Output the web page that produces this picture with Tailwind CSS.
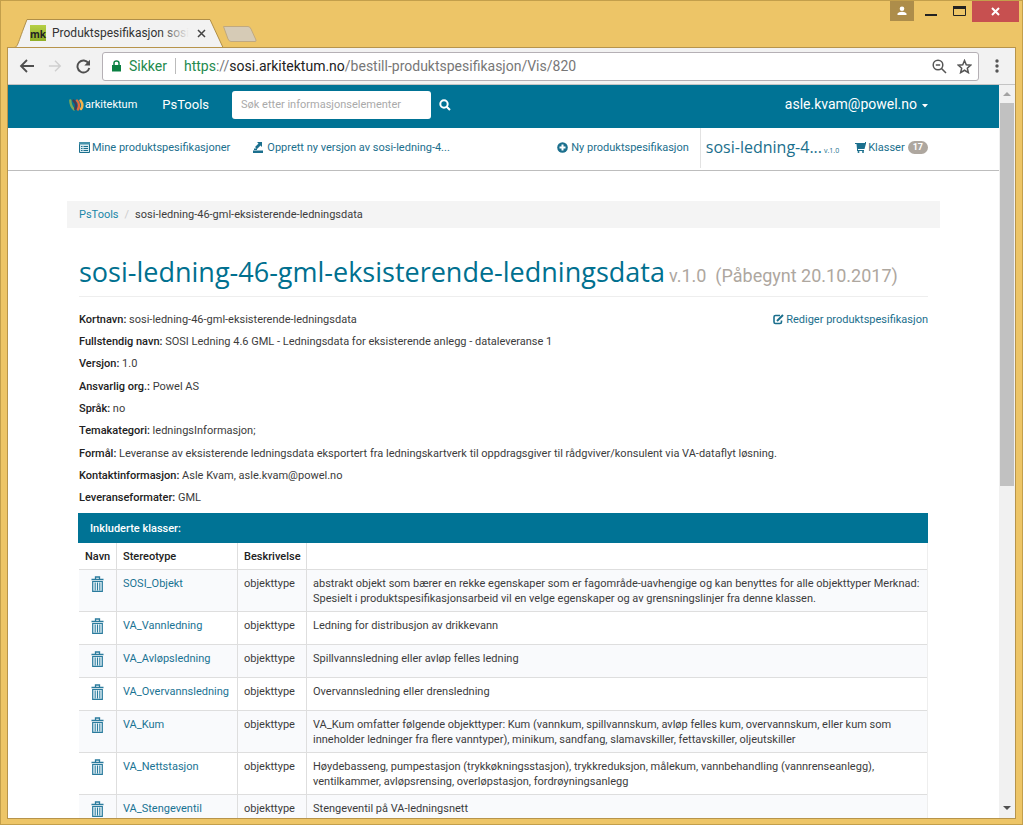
<!DOCTYPE html>
<html lang="no">
<head>
<meta charset="utf-8">
<title>Produktspesifikasjon sosi-ledning-46</title>
<script src="https://cdn.jsdelivr.net/npm/@tailwindcss/browser@4"></script>
</head>
<body class="flex h-screen flex-col overflow-hidden border border-[#c39f4b] bg-[#edc567] px-[6px] pb-[5px] font-['Roboto','Noto_Sans',sans-serif] text-[11px] leading-[15px] text-[#3c3c3c]">
<svg class="hidden">
  <symbol id="trash" viewBox="0 0 13 16"><path d="M.5 3.5h12M4.5 3V1h4v2" fill="none" stroke="#2a7b9d" stroke-width="1.3"/><path d="M1.7 5.5h9.6v9.8H1.7z" fill="#e4f1f6" stroke="#2a7b9d" stroke-width="1.2"/><path d="M4.2 6.500v8M6.500 6.500v8M8.800 6.500v8" stroke="#2a7b9d"/></symbol>
</svg>
<header class="flex h-[46px] shrink-0 justify-between">
  <div class="flex items-end pl-[7px]">
    <div class="relative flex h-[28px] w-[211px] items-center pr-[19px] pl-[16px] text-[12px] text-[#333]">
      <svg class="absolute inset-0 h-full w-full" viewBox="0 0 211 28" preserveAspectRatio="none"><path d="M0 28.500C4 28 3 26 13 .5H196L209 28.500" fill="#f2f2f2" stroke="#b08f48"/></svg>
      <span class="relative flex h-4 w-4 items-end justify-center bg-linear-to-b from-[#b5cf45] to-[#8fae27] font-['Open_Sans'] text-[10px] leading-[13px] font-bold text-[#222]">mk</span>
      <span class="relative ml-[6px] whitespace-nowrap">Produktspesifikasjon sosi<span class="absolute inset-y-0 right-0 w-7 bg-linear-to-r from-transparent to-[#f2f2f2]"></span></span>
      <button class="relative ml-auto" aria-label="Lukk fane"><svg width="9" height="9" viewBox="0 0 9 9" stroke="#444" stroke-width="1.5"><path d="M1 1l7 7M8 1L1 8"/></svg></button>
    </div>
    <button aria-label="Ny fane" class="mb-1 -ml-[3px]"><svg width="36" height="18" viewBox="0 0 36 18"><path d="M1.500 1.500H26Q28 1.500 29 4L34 15Q34.500 16.500 33 16.500H9Q7 16.500 6 14Z" fill="#d6cbb6" stroke="#c0a980"/></svg></button>
  </div>
  <div class="-mr-[3px] flex items-start">
    <button aria-label="Bruker" class="flex h-5 w-6 items-center justify-center bg-[#ad8d4a]"><svg width="10" height="10" viewBox="0 0 10 10" fill="#fff"><circle cx="5" cy="2.700" r="2.300"/><path d="M.5 9V7.500Q1.500 5.800 5 5.800T9.500 7.500V9z"/></svg></button>
    <button aria-label="Minimer" class="flex h-5 w-[33px] items-end justify-center pb-[5px]"><svg width="12" height="2"><path d="M0 0h12v2H0z" fill="#222"/></svg></button>
    <button aria-label="Maksimer" class="flex h-5 w-[25px] items-center justify-center"><svg width="13" height="10"><path d="M.5 1v8.500h12V1" fill="none" stroke="#222"/><path d="M0 0h13v3H0z" fill="#222"/></svg></button>
    <button aria-label="Lukk" class="flex h-[21px] w-[47px] items-center justify-center bg-[#c75050]"><svg width="9" height="9" viewBox="0 0 9 9" stroke="#fff" stroke-width="2"><path d="M1 1l7 7M8 1L1 8"/></svg></button>
  </div>
</header>
<div class="flex min-h-0 flex-1 flex-col border border-[#b7944b] bg-white">
  <div class="flex h-[37px] shrink-0 items-center border-b border-[#c4c4c4] bg-[#f2f2f2] pl-[11px]">
    <button aria-label="Tilbake"><svg width="16" height="14" viewBox="0 0 16 14" fill="none" stroke="#4f4f4f" stroke-width="1.800"><path d="M15 7H2M8 1L2 7l6 6"/></svg></button>
    <button aria-label="Frem" class="ml-[13px]"><svg width="14" height="14" viewBox="0 0 16 14" fill="none" stroke="#cfcfcf" stroke-width="1.600"><path d="M1 7h13M8 1l6 6-6 6"/></svg></button>
    <button aria-label="Last på nytt" class="ml-[14px]"><svg width="15" height="15" viewBox="0 0 15 15"><path d="M12.500 4.200A6 6 0 1 0 13.300 9" fill="none" stroke="#4f4f4f" stroke-width="1.900"/><path d="M14 .8V6.500H8.300z" fill="#4f4f4f"/></svg></button>
    <div class="ml-[11px] flex h-[29px] flex-1 items-center rounded-[3px] border border-[#b5b0b5] bg-white px-[6px] pl-2 text-[14px] whitespace-nowrap">
      <svg width="11" height="12" viewBox="0 0 11 12"><path d="M1 5h9v6.500H1z" fill="#0b8043"/><path d="M3 5V3.200Q3 1 5.500 1T8 3.200V5" fill="none" stroke="#0b8043" stroke-width="1.500"/></svg>
      <span class="ml-[7px] text-[#238a4e]">Sikker</span>
      <span class="mx-2 h-4 w-px bg-[#bbb]"></span>
      <span class="flex-1 text-[#777]"><span class="text-[#238a4e]">https</span>://<span class="text-[#222]">sosi.arkitektum.no</span>/bestill-produktspesifikasjon/Vis/820</span>
      <button aria-label="Zoom"><svg width="15" height="15" viewBox="0 0 15 15" fill="none" stroke="#555" stroke-width="1.500"><circle cx="6" cy="6" r="4.800"/><path d="M9.500 9.500L14 14M3.800 6h4.400"/></svg></button>
      <button aria-label="Bokmerk" class="ml-[10px]"><svg width="15" height="15" viewBox="0 0 24 24" fill="none" stroke="#555" stroke-width="2.400"><path d="M12 2.500l2.800 6.800 7.200.6-5.500 4.800 1.700 7.100L12 18l-6.200 3.800 1.700-7.100L2 9.900l7.200-.6z"/></svg></button>
    </div>
    <button aria-label="Meny" class="mr-[6px] ml-[6px] flex w-6 justify-center"><svg width="4" height="14" fill="#555"><circle cx="2" cy="2" r="1.700"/><circle cx="2" cy="7" r="1.700"/><circle cx="2" cy="12" r="1.700"/></svg></button>
  </div>
  <div class="flex min-h-0 flex-1">
    <div class="min-w-0 flex-1 overflow-hidden">
      <nav class="flex h-[43px] items-center bg-[#007395] pr-[71px] pb-[4px] pl-[61px] text-white">
        <a href="#" class="flex items-center text-[11px]" ><svg class="mr-px" width="15" height="12" viewBox="0 0 15 12" fill="none" stroke-width="2.400" stroke-linecap="round"><path d="M1.300 1.500Q1.500 7 5 10.500" stroke="#79a95a"/><path d="M4.500 1.500Q8.500 5 6.300 10" stroke="#493a50"/><path d="M8 1.500Q11.500 5 9 10.500" stroke="#e5683b"/><path d="M11.500 1.500Q15 6 12 10" stroke="#f3b44b"/></svg>arkitektum</a>
        <a href="#" class="ml-[25px] text-[13px]">PsTools</a>
        <input aria-label="Søk" placeholder="Søk etter informasjonselementer" class="ml-[23px] h-7 w-[199px] rounded-[3px] bg-white px-[9px] text-[11px] placeholder:text-[#aaa]">
        <button aria-label="Søk" class="ml-2"><svg width="12" height="12" viewBox="0 0 12 12" fill="none" stroke="#fff" stroke-width="2"><circle cx="5" cy="5" r="3.700"/><path d="M7.700 7.700L11 11"/></svg></button>
        <button class="ml-auto flex items-center text-[14px]">asle.kvam@powel.no<svg class="mt-[2px] ml-[5px]" width="6" height="4"><path d="M0 0h6L3 3.500z" fill="#fff"/></svg></button>
      </nav>
      <nav class="flex h-[43px] items-center border-b border-[#bdbdbd] pr-[71px] pb-[3px] pl-[71px] whitespace-nowrap text-[#1b6f8d]">
        <a href="#" class="flex items-center"><svg class="mr-[2px]" width="11" height="11" viewBox="0 0 11 11"><path d="M.5.500h10v10H.5z" fill="#d8eaf0" stroke="#1b6f8d"/><path d="M0 0h11v2.500H0z" fill="#4793ab"/><path d="M2 4.500h1.500M4.500 4.500h4.500M2 6.500h1.500M4.500 6.500h4.500M2 8.500h1.500M4.500 8.500h4.500" stroke="#1b6f8d"/></svg>Mine produktspesifikasjoner</a>
        <a href="#" class="ml-[23px] flex items-center"><svg class="mr-1" width="10" height="11" viewBox="0 0 10 11" fill="#1b6f8d"><path d="M0 8.500h10V11H0zM4 0h5v5L7.500 3.500 4 7 2 5l3.500-3.500zM1 6.500h3V8H1z"/></svg>Opprett ny versjon av sosi-ledning-4...</a>
        <a href="#" class="ml-auto flex items-center"><svg class="mr-[3px]" width="11" height="11" viewBox="0 0 11 11"><circle cx="5.500" cy="5.500" r="5.300" fill="#1b6f8d"/><path d="M5.500 2.500v6M2.500 5.500h6" stroke="#fff" stroke-width="2"/></svg>Ny produktspesifikasjon</a>
        <a href="#" class="ml-[11px] flex h-10 items-center border-l border-[#e2e2e2] pl-[5px] font-['Open_Sans'] text-[16px]">sosi-ledning-4...<small class="mt-[5px] ml-[2px] text-[7px]">v.1.0</small></a>
        <a href="#" class="ml-4 flex items-center"><svg class="mr-[2px]" width="11" height="11" viewBox="0 0 11 11" fill="#1b6f8d"><path d="M0 1h10V0H11v1.500L9.500 7H3v1h6v1H2V7L1.500 2H0z"/><circle cx="3.500" cy="10" r="1"/><circle cx="8" cy="10" r="1"/></svg>Klasser<span class="ml-[3px] rounded-full bg-[#aea79f] px-[5px] text-[9px] leading-[13px] font-bold text-white">17</span></a>
      </nav>
      <main class="px-[59px] pt-[30px]">
        <nav class="flex h-[27px] items-center bg-[#f4f4f4] px-3"><a href="#" class="text-[#1a87a8]">PsTools</a><span class="mx-[6px] text-[#ccc]">/</span><span>sosi-ledning-46-gml-eksisterende-ledningsdata</span></nav>
        <div class="mr-3 ml-3">
          <h1 class="flex h-[69px] items-end border-b border-[#eeeeee] pb-[2px] font-['Open_Sans'] text-[27px] leading-9 whitespace-nowrap text-[#00708f]"><span>sosi-ledning-46-gml-eksisterende-ledningsdata<small class="ml-1 font-['Roboto'] text-[18px] text-[#aea79f]">v.1.0&nbsp; (Påbegynt 20.10.2017)</small></span></h1>
          <div class="flex items-start justify-between pt-[11px]">
            <div class="grid h-[201px] auto-rows-fr items-center [&_b]:font-medium [&_b]:text-[#222]">
              <p><b>Kortnavn:</b> sosi-ledning-46-gml-eksisterende-ledningsdata</p>
              <p><b>Fullstendig navn:</b> SOSI Ledning 4.6 GML - Ledningsdata for eksisterende anlegg - dataleveranse 1</p>
              <p><b>Versjon:</b> 1.0</p>
              <p><b>Ansvarlig org.:</b> Powel AS</p>
              <p><b>Språk:</b> no</p>
              <p><b>Temakategori:</b> ledningsInformasjon;</p>
              <p class="-mr-40 whitespace-nowrap"><b>Formål:</b> Leveranse av eksisterende ledningsdata eksportert fra ledningskartverk til oppdragsgiver til rådgviver/konsulent via VA-dataflyt løsning.</p>
              <p><b>Kontaktinformasjon:</b> Asle Kvam, asle.kvam@powel.no</p>
              <p><b>Leveranseformater:</b> GML</p>
            </div>
            <a href="#" class="mt-1 flex shrink-0 items-center text-[#1b6f8d]"><svg class="mr-[2px]" width="11" height="11" viewBox="0 0 11 11" fill="none" stroke="#1b6f8d" stroke-width="1.600"><path d="M7 1.500H2.500Q1 1.500 1 3v5q0 1.500 1.500 1.500H7Q8.500 9.500 8.500 8V6.500"/><path d="M4 7l6-6" stroke-width="2"/></svg>Rediger produktspesifikasjon</a>
          </div>
          <section class="mt-1">
            <h2 class="-ml-px flex h-[30px] items-center bg-[#007395] px-3 font-medium text-white">Inkluderte klasser:</h2>
            <table class="w-full table-fixed border-separate border-spacing-0 border-r border-[#eee] text-left [&_a]:text-[#1a7393] [&_button]:block [&_svg]:h-4 [&_svg]:w-[13px] [&_td]:border-b [&_td]:border-[#dedede] [&_td]:px-[6px] [&_td]:pt-[6px] [&_td]:pb-[5px] [&_td]:align-top [&_td:first-child]:pl-3 [&_td+td]:border-l [&_th]:h-[27px] [&_th]:border-b [&_th]:border-[#dedede] [&_th]:px-[6px] [&_th]:font-medium [&_th]:text-[#222] [&_th+th]:border-l [&_tbody_tr]:h-[33px] [&_tbody_tr:nth-child(odd)]:bg-[#f9fafc]">
              <colgroup><col class="w-[37px]"><col class="w-[121px]"><col class="w-[69px]"><col></colgroup>
              <thead><tr><th>Navn</th><th>Stereotype</th><th>Beskrivelse</th><th></th></tr></thead>
              <tbody>
                <tr><td><button aria-label="Slett"><svg><use href="#trash"/></svg></button></td><td><a href="#">SOSI_Objekt</a></td><td>objekttype</td><td>abstrakt objekt som bærer en rekke egenskaper som er fagområde-uavhengige og kan benyttes for alle objekttyper Merknad:<br>Spesielt i produktspesifikasjonsarbeid vil en velge egenskaper og av grensningslinjer fra denne klassen.</td></tr>
                <tr><td><button aria-label="Slett"><svg><use href="#trash"/></svg></button></td><td><a href="#">VA_Vannledning</a></td><td>objekttype</td><td>Ledning for distribusjon av drikkevann</td></tr>
                <tr><td><button aria-label="Slett"><svg><use href="#trash"/></svg></button></td><td><a href="#">VA_Avløpsledning</a></td><td>objekttype</td><td>Spillvannsledning eller avløp felles ledning</td></tr>
                <tr><td><button aria-label="Slett"><svg><use href="#trash"/></svg></button></td><td><a href="#">VA_Overvannsledning</a></td><td>objekttype</td><td>Overvannsledning eller drensledning</td></tr>
                <tr><td><button aria-label="Slett"><svg><use href="#trash"/></svg></button></td><td><a href="#">VA_Kum</a></td><td>objekttype</td><td>VA_Kum omfatter følgende objekttyper: Kum (vannkum, spillvannskum, avløp felles kum, overvannskum, eller kum som<br>inneholder ledninger fra flere vanntyper), minikum, sandfang, slamavskiller, fettavskiller, oljeutskiller</td></tr>
                <tr><td><button aria-label="Slett"><svg><use href="#trash"/></svg></button></td><td><a href="#">VA_Nettstasjon</a></td><td>objekttype</td><td>Høydebasseng, pumpestasjon (trykkøkningsstasjon), trykkreduksjon, målekum, vannbehandling (vannrenseanlegg),<br>ventilkammer, avløpsrensing, overløpstasjon, fordrøyningsanlegg</td></tr>
                <tr><td><button aria-label="Slett"><svg><use href="#trash"/></svg></button></td><td><a href="#">VA_Stengeventil</a></td><td>objekttype</td><td>Stengeventil på VA-ledningsnett</td></tr>
              </tbody>
            </table>
          </section>
        </div>
      </main>
    </div>
    <div class="flex w-4 flex-col items-center bg-[#f1f1f1]" aria-hidden="true">
      <svg class="my-[7px] shrink-0" width="8" height="4"><path d="M0 4h8L4 0z" fill="#a3a3a3"/></svg>
      <div class="h-[383px] w-[14px] bg-[#c1c1c1]"></div>
      <svg class="mt-auto mb-[8px] shrink-0" width="8" height="4"><path d="M0 0h8L4 4z" fill="#505050"/></svg>
    </div>
  </div>
</div>
</body>
</html>
